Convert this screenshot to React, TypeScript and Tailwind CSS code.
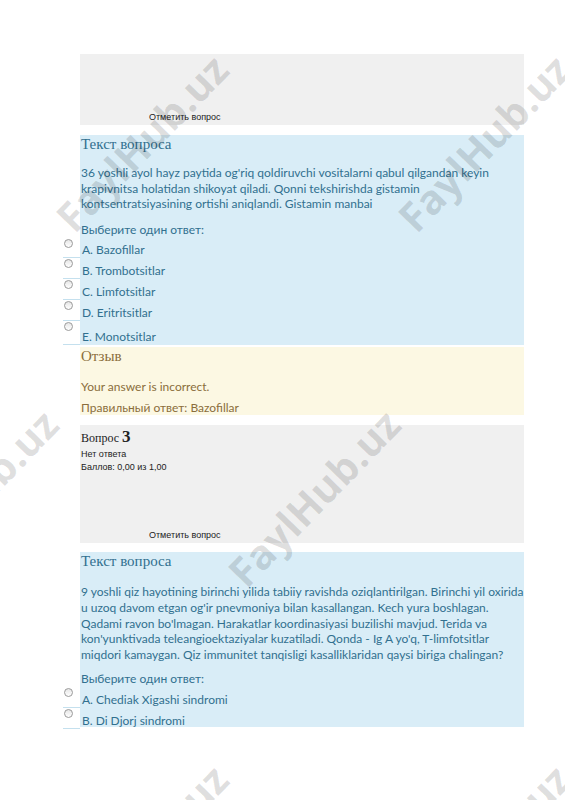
import React from 'react';

const serif = "font-['Liberation_Serif','DejaVu_Serif',serif]";
const small = "font-['Liberation_Sans',Arial,sans-serif] text-[9px] leading-[13px]";

function Radio() {
  return (
    <div className="w-[17px] shrink-0 self-stretch bg-white border-b border-[#c4e0ee] pl-[1px] pt-[1px]">
      <div className="w-[9px] h-[9px] rounded-full border border-[#9a9a9a] bg-gradient-to-b from-[#e6e6e6] to-white" />
    </div>
  );
}

function Option({ label, tall }: { label: string; tall?: boolean }) {
  return (
    <div className={`flex -ml-[17px] ${tall ? 'h-[24px]' : 'h-[20.8px]'}`}>
      <Radio />
      <div className="flex items-end pl-[2px] leading-[16px]">{label}</div>
    </div>
  );
}

function Mark({ x, y }: { x: number; y: number }) {
  return (
    <span
      className="absolute -translate-x-1/2 -translate-y-1/2 -rotate-[46deg] whitespace-nowrap font-['Open_Sans',sans-serif] font-bold text-[41px] text-black/[0.13] pointer-events-none select-none"
      style={{ left: x, top: y }}
    >
      FaylHub.uz
    </span>
  );
}

export default function App() {
  return (
    <div className="relative h-[800px] w-[565px] overflow-hidden bg-white font-['Lato','Noto_Sans',sans-serif]">
      <div className="ml-[80px] w-[444px] pt-[54px]">
        <div className="h-[71px] bg-[#f0f0f0] flex flex-col justify-end pl-[69px] pb-[1px]">
          <span className={`${small} text-[#222]`}>Отметить вопрос</span>
        </div>

        <div className="mt-[10px] bg-[#d9edf7] text-[#31708f] text-[12px] h-[210px]">
          <div className={`${serif} text-[15px] leading-[18px] pl-[1px]`}>Текст вопроса</div>
          <p className="mt-[12px] leading-[15.5px] pl-[1px]">
            36 yoshli ayol hayz paytida og'riq qoldiruvchi vositalarni qabul qilgandan keyin
            <br />
            krapivnitsa holatidan shikoyat qiladi. Qonni tekshirishda gistamin
            <br />
            kontsentratsiyasining ortishi aniqlandi. Gistamin manbai
          </p>
          <div className="mt-[10px] leading-[16px] pl-[1px]">Выберите один ответ:</div>
          <div>
            <Option label="A. Bazofillar" />
            <Option label="B. Trombotsitlar" />
            <Option label="C. Limfotsitlar" />
            <Option label="D. Eritritsitlar" />
            <Option label="E. Monotsitlar" tall />
          </div>
        </div>

        <div className="mt-[2px] bg-[#fcf8e3] text-[#8a6d3b] text-[12px] h-[68px] pl-[1px]">
          <div className={`${serif} text-[15px] leading-[18px]`}>Отзыв</div>
          <div className="mt-[14px] leading-[16px]">Your answer is incorrect.</div>
          <div className="mt-[5px] leading-[16px]">Правильный ответ: Bazofillar</div>
        </div>

        <div className="mt-[10px] bg-[#f0f0f0] h-[118px] flex flex-col text-[#222] pl-[1px]">
          <div className={`${serif} text-[12px] leading-[20px] mt-[2px]`}>
            Вопрос <span className="text-[17px] font-bold">3</span>
          </div>
          <div className={small}>Нет ответа</div>
          <div className={small}>Баллов: 0,00 из 1,00</div>
          <div className={`${small} mt-auto pl-[68px] pb-[1px]`}>Отметить вопрос</div>
        </div>

        <div className="mt-[9px] bg-[#d9edf7] text-[#31708f] text-[12px] h-[175px]">
          <div className={`${serif} text-[15px] leading-[18px] pl-[1px]`}>Текст вопроса</div>
          <p className="mt-[14px] leading-[15.8px] pl-[1px]">
            9 yoshli qiz hayotining birinchi yilida tabiiy ravishda oziqlantirilgan. Birinchi yil oxirida
            <br />
            u uzoq davom etgan og'ir pnevmoniya bilan kasallangan. Kech yura boshlagan.
            <br />
            Qadami ravon bo'lmagan. Harakatlar koordinasiyasi buzilishi mavjud. Terida va
            <br />
            kon'yunktivada teleangioektaziyalar kuzatiladi. Qonda - Ig A yo'q, T-limfotsitlar
            <br />
            miqdori kamaygan. Qiz immunitet tanqisligi kasalliklaridan qaysi biriga chalingan?
          </p>
          <div className="mt-[8px] leading-[16px] pl-[1px]">Выберите один ответ:</div>
          <Option label="A. Chediak Xigashi sindromi" />
          <Option label="B. Di Djorj sindromi" />
        </div>
      </div>

      <Mark x={142} y={143} />
      <Mark x={484} y={143} />
      <Mark x={314} y={498} />
      <Mark x={-28} y={498} />
      <Mark x={142} y={853} />
      <Mark x={484} y={853} />
    </div>
  );
}
